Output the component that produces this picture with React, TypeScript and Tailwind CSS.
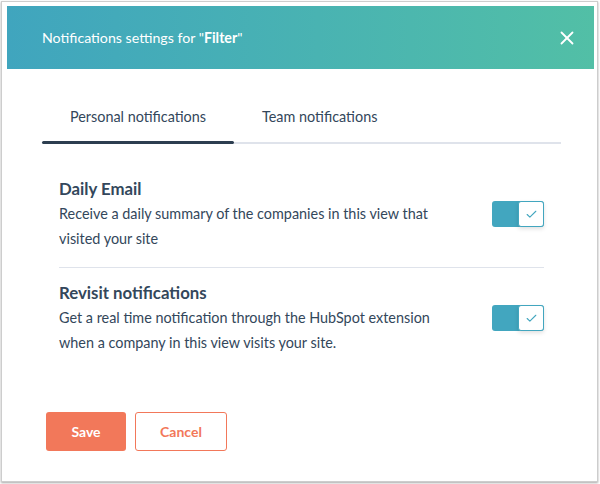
import { X, Check } from 'lucide-react';

type Setting = {
    title: string;
    lines: string;
    on: boolean;
};

const settings: Setting[] = [
    {
        title: 'Daily Email',
        lines: 'Receive a daily summary of the companies in this view that visited your site',
        on: true,
    },
    {
        title: 'Revisit notifications',
        lines: 'Get a real time notification through the HubSpot extension when a company in this view visits your site.',
        on: true,
    },
];

function Toggle({ on }: { on: boolean }) {
    return (
        <div className={`w-[52px] h-[26px] rounded-[3px] flex ${on ? 'bg-[#42a6bf] justify-end' : 'bg-[#cbd6e2] justify-start'}`}>
            <div className="w-[26px] h-[26px] bg-white rounded-[3px] border border-[#42a6bf] shadow-[0_2px_4px_rgba(0,0,0,0.12)] flex items-center justify-center">
                {on && <Check size={13} strokeWidth={2} className="text-[#42a6bf]" />}
            </div>
        </div>
    );
}

export default function App() {
    return (
        <div className="w-[600px] h-[484px] bg-white p-[1px] font-['Lato',sans-serif] text-[#33475b]">
            <div className="w-[597px] h-[481px] border border-[#cdcdcd] shadow-[0_1px_2px_rgba(0,0,0,0.35)] pl-[5px] pr-[3px] pt-[4px] flex flex-col">
                {/* Header */}
                <div className="h-[63px] shrink-0 bg-gradient-to-r from-[#40a5be] to-[#52bfa6] flex items-center justify-between pl-[35px] pr-[16px]">
                    <span className="text-white text-[14.2px]">
                        Notifications settings for "<span className="font-bold">Filter</span>"
                    </span>
                    <X size={22} strokeWidth={2} className="text-white" />
                </div>

                {/* Body */}
                <div className="pl-[35px] pr-[33px] flex flex-col">
                    {/* Tabs */}
                    <div className="pt-[38px]">
                        <div className="flex text-[14.4px] leading-[20px] pb-[14px]">
                            <div className="w-[192px] text-center">Personal notifications</div>
                            <div className="px-[28px]">Team notifications</div>
                        </div>
                        <div className="h-[3px] flex items-center">
                            <div className="w-[192px] h-[3px] rounded-full bg-[#2d3e50]" />
                            <div className="flex-1 h-[2px] bg-[#dfe3eb]" />
                        </div>
                    </div>

                    {/* Settings */}
                    <div className="px-[17px] pt-[33px]">
                        {settings.map((s, i) => (
                            <div key={s.title}>
                                {i > 0 && <div className="h-px bg-[#dfe3eb] mt-[16px] mb-[13px]" />}
                                <div className="flex items-center">
                                    <div className="flex-1 pr-[36px]">
                                        <div className="text-[16.8px] leading-[24px] font-bold">{s.title}</div>
                                        <p className="text-[14.4px] leading-[25px]">{s.lines}</p>
                                    </div>
                                    <Toggle on={s.on} />
                                </div>
                            </div>
                        ))}
                    </div>

                    {/* Actions */}
                    <div className="flex gap-[9px] ml-[4px] mt-[57px]">
                        <button className="w-[80px] h-[39px] rounded-[3px] bg-[#f2785a] text-white text-[14px] font-bold">
                            Save
                        </button>
                        <button className="w-[92px] h-[39px] rounded-[3px] border border-[#f2785a] bg-white text-[#f2785a] text-[14px] font-bold">
                            Cancel
                        </button>
                    </div>
                </div>
            </div>
        </div>
    );
}
